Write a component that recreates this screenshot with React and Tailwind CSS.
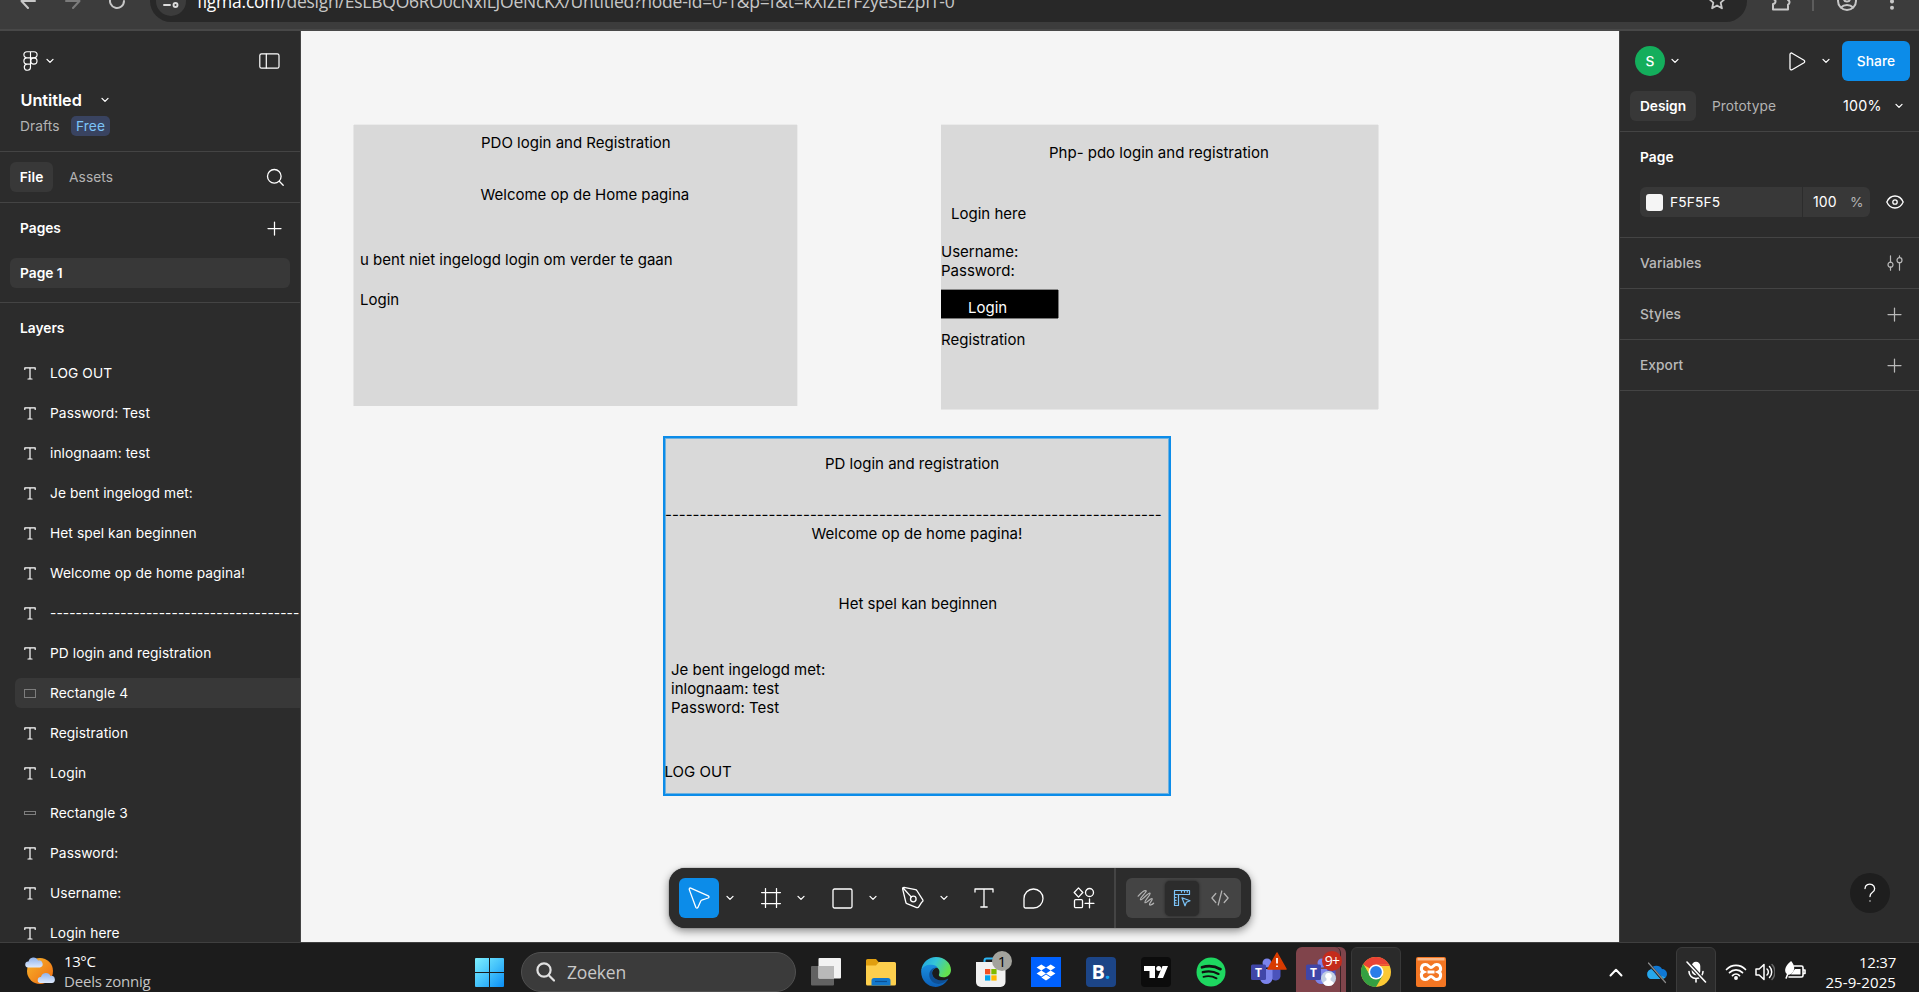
import React from "react";

const layers = [
  ["text", "LOG OUT"],
  ["text", "Password: Test"],
  ["text", "inlognaam: test"],
  ["text", "Je bent ingelogd met:"],
  ["text", "Het spel kan beginnen"],
  ["text", "Welcome op de home pagina!"],
  ["text", "---------------------------------------"],
  ["text", "PD login and registration"],
  ["rect", "Rectangle 4"],
  ["text", "Registration"],
  ["text", "Login"],
  ["bar", "Rectangle 3"],
  ["text", "Password:"],
  ["text", "Username:"],
  ["text", "Login here"],
];

function Svg({ w, h, vb, className = "", sw = 1.25, children }) {
  return (
    <svg
      width={w}
      height={h}
      viewBox={vb || `0 0 ${w} ${h}`}
      fill="none"
      stroke="currentColor"
      strokeWidth={sw}
      strokeLinecap="round"
      strokeLinejoin="round"
      className={`shrink-0 ${className}`}
    >
      {children}
    </svg>
  );
}

const Chevron = ({ className = "" }) => (
  <Svg w={8} h={6} sw={1.3} className={className}>
    <path d="M1 1.4l3 3 3-3" />
  </Svg>
);

const Plus = ({ className = "" }) => (
  <Svg w={15} h={15} className={className}>
    <path d="M7.500 1v13M1 7.500h13" />
  </Svg>
);

function BrowserBar() {
  return (
    <header className="flex h-[31px] shrink-0 items-end overflow-hidden border-b-2 border-[#484848] bg-[#3c3c3c] pb-[7px] font-['Open_Sans','Noto_Sans',sans-serif]">
      <div className="flex h-[42px] w-[150px] shrink-0 items-center pl-5">
        <Svg w={16} h={16} sw={2} className="text-[#c7c7c7]">
          <path d="M15 8H2M8 1L1.5 8 8 15" />
        </Svg>
        <Svg w={16} h={16} sw={2} className="ml-[29px] text-[#7b7b7b]">
          <path d="M1 8h13M8 1l6.5 7L8 15" />
        </Svg>
        <Svg w={16} h={16} sw={2} className="ml-[28px] text-[#c7c7c7]">
          <path d="M15 8A7 7 0 1 1 12.5 2.6" />
        </Svg>
      </div>
      <div className="flex h-[42px] w-[1597px] shrink-0 items-center rounded-full bg-[#282828] pl-1.5">
        <div className="flex size-[30px] items-center justify-center rounded-full bg-[#3c3c3c]">
          <Svg w={16} h={16} sw={1.9} className="text-[#dcdcdc]">
            <path d="M1 12h6M9 4h6" />
            <circle cx="12.5" cy="12" r="2" />
            <circle cx="3.5" cy="4" r="2" />
          </Svg>
        </div>
        <div className="ml-[11px] whitespace-nowrap text-[17.5px] leading-6 tracking-[-0.24px] text-[#c7c7c7]">
          <span className="text-white">figma.com</span>
          /design/EsLBQO6RO0cNxiLJOeNcKX/Untitled?node-id=0-1&amp;p=f&amp;t=kXIZErFzyeSEzpIT-0
        </div>
        <Svg w={18} h={18} sw={1.8} className="mr-[21px] ml-auto text-[#c7c7c7]">
          <path d="M9 1.2l2.3 5.2 5.6.5-4.2 3.8 1.2 5.6L9 13.4l-4.9 2.9 1.2-5.6L1.1 6.9l5.6-.5z" />
        </Svg>
      </div>
      <div className="flex h-[42px] grow items-center text-[#c7c7c7]">
        <Svg w={20} h={20} sw={2} className="ml-[24px]">
          <path d="M2 18.5V13a2.5 2.5 0 0 0 0-5V4h5a2.5 2.5 0 0 1 5 0h5v5a2.5 2.5 0 0 1 0 4.6v4.9z" />
        </Svg>
        <div className="ml-[21px] h-5 w-0.5 bg-[#5c5c5c]" />
        <Svg w={20} h={20} sw={2} className="ml-[23px]">
          <circle cx="10" cy="10" r="9" />
          <circle cx="10" cy="7.5" r="3" />
          <path d="M4 16.5c3-3.4 9-3.4 12 0" />
        </Svg>
        <Svg w={6} h={18} className="ml-[32px]">
          <g fill="currentColor" stroke="none">
            <circle cx="3" cy="3" r="2" />
            <circle cx="3" cy="9.4" r="2" />
            <circle cx="3" cy="15.8" r="2" />
          </g>
        </Svg>
      </div>
    </header>
  );
}

function LayerIcon({ kind }) {
  if (kind === "rect") return <span className="ml-px h-[9px] w-3 border border-[#7d7d7d]" />;
  if (kind === "bar") return <span className="ml-px h-[4px] w-3 border border-[#7d7d7d]" />;
  return (
    <Svg w={12} h={13} sw={1.2} className="ml-[0.5px] text-white">
      <path d="M.8 2.500V.8h10.400v1.700M6 .8v11.200M4 12h4" />
    </Svg>
  );
}

function LeftPanel() {
  return (
    <aside className="flex w-[301px] shrink-0 flex-col overflow-hidden border-r border-[#444] bg-[#2c2c2c] text-[13.75px] leading-5 tracking-[0.07px] text-white">
      <div className="h-[121px] shrink-0 border-b border-[#444] px-5 pt-5">
        <div className="flex h-5 items-center">
          <Svg w={15} h={20} sw={1.15} className="ml-[3px]">
            <path d="M7.500.7H4a3.100 3.100 0 0 0 0 6.200h3.500zM7.500.7H11a3.100 3.100 0 0 1 0 6.200H7.500zM7.500 6.900H4a3.100 3.100 0 0 0 0 6.200h3.500zM7.500 13.100H4a3.100 3.100 0 1 0 3.500 3.100z" />
            <circle cx="10.900" cy="10" r="3.100" />
          </Svg>
          <Chevron className="ml-2" />
          <Svg w={21} h={16} sw={1.2} className="ml-auto">
            <rect x=".8" y=".8" width="19.200" height="14.400" rx="1.800" />
            <path d="M7.300 1v14" />
          </Svg>
        </div>
        <div className="mt-[19px] flex h-5 items-center">
          <span className="w-[81px] pl-[0.5px] text-[16.25px] font-semibold tracking-[-0.05px]">Untitled</span>
          <Chevron />
        </div>
        <div className="mt-[6px] flex items-center text-[#b3b3b3]">
          <span className="w-[51px]">Drafts</span>
          <span className="rounded-[5px] bg-[#394360] px-[5px] text-[#7cc4f8]">Free</span>
        </div>
      </div>
      <div className="flex h-[51px] shrink-0 items-center border-b border-[#444] pr-4 pl-2.5">
        <span className="flex h-[30px] w-[43px] items-center justify-center rounded-md bg-[#383838] font-semibold">File</span>
        <span className="ml-4 text-[#b3b3b3]">Assets</span>
        <Svg w={18} h={18} sw={1.3} className="ml-auto">
          <circle cx="8.300" cy="8.300" r="6.800" />
          <path d="M13.300 13.300l3.900 3.900" />
        </Svg>
      </div>
      <div className="h-[100px] shrink-0 border-b border-[#444] font-semibold tracking-normal">
        <div className="flex h-[50px] items-center justify-between pr-[18px] pl-5">
          <span>Pages</span>
          <Plus />
        </div>
        <div className="mx-2.5 mt-[5px] flex h-[30px] items-center rounded-md bg-[#383838] pl-2.5">Page 1</div>
      </div>
      <div className="flex h-[50px] shrink-0 items-center pl-5 font-semibold tracking-normal">Layers</div>
      {layers.map(([kind, name], i) => (
        <div key={i} className="flex h-10 shrink-0 items-center pl-[15px]">
          <div className={`flex h-[30px] w-full items-center rounded-l-md pl-2 ${name === "Rectangle 4" ? "bg-[#383838]" : ""}`}>
            <div className="flex w-[27px] shrink-0 items-center">
              <LayerIcon kind={kind} />
            </div>
            <span className="whitespace-nowrap">{name}</span>
          </div>
        </div>
      ))}
    </aside>
  );
}

/* Canvas objects carry their own x/y, relative to the canvas origin. */
const canvasTexts = [
  [180, 102, "PDO login and Registration"],
  [179.5, 154, "Welcome op de Home pagina"],
  [59, 219, "u bent niet ingelogd login om verder te gaan"],
  [59, 259, "Login"],
  [748, 112, "Php- pdo login and registration"],
  [650, 173, "Login here"],
  [640, 211, "Username:"],
  [640, 230, "Password:"],
  [640, 299, "Registration"],
  [524, 423, "PD login and registration"],
  [510.5, 493, "Welcome op de home pagina!"],
  [537.5, 563, "Het spel kan beginnen"],
  [370, 629, "Je bent ingelogd met:"],
  [370, 648, "inlognaam: test"],
  [370, 667, "Password: Test"],
  [363.5, 731, "LOG OUT"],
];

function Toolbar() {
  return (
    <div className="absolute top-[837px] left-[368px] flex h-[60px] w-[582px] items-center rounded-2xl bg-[#2c2c2c] pl-2.5 text-white shadow-[0_3px_8px_rgba(0,0,0,0.45),0_0_1px_rgba(0,0,0,0.8)]">
      <div className="flex size-10 items-center justify-center rounded-md bg-[#0c8ce9]">
        <Svg w={24} h={24} sw={1.3}>
          <path d="M2.300 3.600c-.4-1 .4-1.900 1.400-1.500l17.600 7.700c1 .5.9 1.800-.1 2.200l-6.500 2.100c-.4.1-.7.4-.8.700l-3 6.600c-.5 1-1.700.9-2.100-.100z" />
        </Svg>
      </div>
      <Chevron className="ml-[7px]" />
      <Svg w={20} h={20} className="ml-[27px]" sw={1.25}>
        <path d="M4.500.6v18.800M15.500.6v18.800M.6 4.500h18.800M.6 15.500h18.800" />
      </Svg>
      <Chevron className="ml-4" />
      <Svg w={21} h={21} className="ml-[27px]" sw={1.3}>
        <rect x="1" y="1" width="19" height="19" rx="1.500" />
      </Svg>
      <Chevron className="ml-4" />
      <Svg w={24} h={24} className="ml-[24px]" sw={1.3}>
        <path d="M1.600 2.800C1.500 2 2.200 1.300 3 1.400l11.500 2.300c.5.1 1 .4 1.300.800l6 9.300c.4.700.2 1.500-.4 1.900l-.8.600-2.900 4.600c-.4.7-1.200.9-1.900.700l-9.900-3.900c-.5-.2-.9-.7-1-1.200zM1.900 1.700l8.500 9.400" />
        <circle cx="12.300" cy="13" r="2.800" />
      </Svg>
      <Chevron className="ml-[15px]" />
      <Svg w={20} h={20} className="ml-[26px]" sw={1.3}>
        <path d="M1 4V1h18v3M10 1v18M6.800 19h6.400" />
      </Svg>
      <Svg w={21} h={21} className="ml-[29px]" sw={1.3}>
        <path d="M1 10.500a9.500 9.500 0 1 1 9.500 9.500H2.500A1.500 1.500 0 0 1 1 18.500z" />
      </Svg>
      <Svg w={22} h={22} className="ml-[29px]" sw={1.3}>
        <path d="M5.500.9l4.300 4.600-4.300 4.600L1.200 5.500zM16.500 12v8.800M12.100 16.400h8.800" />
        <circle cx="16.500" cy="5.500" r="4" />
        <rect x="1.500" y="12.600" width="8" height="8" rx="1.200" />
      </Svg>
      <div className="ml-[19px] h-full w-0.5 bg-[#444]" />
      <div className="ml-[10px] flex h-10 w-[115px] items-center rounded-md bg-[#444] text-[#b3b3b3]">
        <Svg w={18} h={18} className="ml-[11px]" sw={1.25}>
          <path d="M1.200 7.200C3.500 4.500 7.500 1 9 1.700c1.500.9-6.800 7.600-5.500 9C4.800 12 11.500 3 13 4.200c1.300 1.100-6.300 8.200-4.900 9.500 1.200 1 5.700-4.900 7-3.900 1.100.9-3.400 4.800-2.500 6 .7.800 2.900-.6 4-1.600" />
        </Svg>
        <div className="ml-[10px] flex h-[35px] w-[34px] items-center justify-center rounded-[5px] bg-[#2c2c2c] text-[#7cc4f8] shadow-[0_0_3px_rgba(0,0,0,0.5)]">
          <Svg w={18} h={18} sw={1.2}>
            <path d="M5.500 16.500h-4V1.500h15v4h-11zM1.500 5.500h4M5.500 5.500v11M8.500 1.700v1.500M11.500 1.700v1.500M14.300 1.700v1.500M1.700 8.500h1.500M1.700 11.300h1.500M1.700 14h1.500M9 8.800l8 3-3.600 1.500-1.400 3.500z" />
          </Svg>
        </div>
        <Svg w={18} h={16} className="ml-3" sw={1.25}>
          <path d="M4.800 3.500L.9 8l3.900 4.500M13.200 3.500L17.100 8l-3.900 4.500M10.800 1L7.200 15" />
        </Svg>
      </div>
    </div>
  );
}

function Canvas() {
  return (
    <main className="relative w-[1318px] shrink-0 overflow-hidden bg-[#f5f5f5] text-[15px] leading-[19px] text-black">
      <div className="absolute top-[94px] left-[53px] h-[281px] w-[443px] bg-[#d9d9d9] shadow-[-1px_0_0_#e6e6e6,1px_0_0_#ebebeb,0_-1px_0_#ebebeb]" />
      <div className="absolute top-[94px] left-[640px] h-[284px] w-[437px] bg-[#d9d9d9] shadow-[1px_0_0_#e6e6e6,0_1px_0_#e6e6e6,0_-1px_0_#ebebeb]" />
      <div className="absolute top-[259px] left-[640px] h-[28px] w-[117px] bg-black shadow-[1px_0_0_#777,0_1px_0_#777,0_-1px_0_#888]" />
      <div className="absolute top-[405px] left-[362px] h-[360px] w-[508px] border-2 border-[#0c8ce9] bg-[#d9d9d9] shadow-[inset_0_0_0_1px_#6eb2e0]" />
      {canvasTexts.map(([x, y, text]) => (
        <span key={`${x}-${y}`} className="absolute whitespace-nowrap" style={{ left: x, top: y }}>
          {text}
        </span>
      ))}
      <span className="absolute top-[267px] left-[667px] text-white">Login</span>
      <span className="absolute top-[474px] left-[364px] whitespace-nowrap">{"-".repeat(72)}</span>
      <Toolbar />
    </main>
  );
}

function PanelRow({ label, children }) {
  return (
    <div className="flex h-[51px] shrink-0 items-center justify-between border-b border-[#444] pr-[17px] pl-5 font-medium text-[#b9b9b9]">
      <span>{label}</span>
      {children}
    </div>
  );
}

function RightPanel() {
  return (
    <aside className="flex w-[300px] shrink-0 flex-col border-l border-[#444] bg-[#2c2c2c] text-[13.75px] leading-5 tracking-[0.05px] text-white">
      <div className="h-[101px] shrink-0 border-b border-[#444]">
        <div className="flex h-[60px] items-center pr-[9px] pl-[15px]">
          <span className="flex size-[30px] items-center justify-center rounded-full bg-[#14ae5c] font-medium">S</span>
          <Chevron className="ml-1.5" />
          <Svg w={17} h={19} className="ml-[110px]" sw={1.3}>
            <path d="M1 2.400C1 1.300 2 .700 3 1.200l12 7c.9.600.9 1.900 0 2.500l-12 7c-1 .5-2-.100-2-1.200z" />
          </Svg>
          <Chevron className="ml-[16px]" />
          <span className="ml-auto flex h-10 w-[68px] items-center justify-center rounded-md bg-[#0c8ce9] font-medium">Share</span>
        </div>
        <div className="flex h-[30px] items-center pl-2.5">
          <span className="flex h-[30px] w-[66px] items-center justify-center rounded-md bg-[#383838] font-semibold tracking-normal">Design</span>
          <span className="ml-4 w-[130px] text-[#b3b3b3]">Prototype</span>
          <span className="w-[53px] pl-px text-[14.25px] tracking-[0.2px]">100%</span>
          <Chevron />
        </div>
      </div>
      <div className="h-[106px] shrink-0 border-b border-[#444] pl-5">
        <div className="flex h-[50px] items-center font-semibold">Page</div>
        <div className="mt-[5px] flex h-[30px] items-center">
          <div className="flex h-full w-[162px] items-center rounded-l-md bg-[#383838] pl-1.5">
            <span className="size-[17px] rounded-[3px] bg-[#f5f5f5]" />
            <span className="ml-[7px] tracking-[0.15px]">F5F5F5</span>
          </div>
          <div className="ml-px flex h-full w-[67px] items-center rounded-r-md bg-[#383838] pl-2.5">
            <span className="w-[37px] text-[14px]">100</span>
            <span className="text-[#b3b3b3]">%</span>
          </div>
          <Svg w={18} h={14} sw={1.3} className="ml-4">
            <path d="M.8 7C2.500 3.200 5.500 1 9 1s6.500 2.200 8.200 6c-1.700 3.800-4.700 6-8.200 6S2.500 10.800.8 7z" />
            <circle cx="9" cy="7" r="2.200" />
          </Svg>
        </div>
      </div>
      <PanelRow label="Variables">
        <Svg w={16} h={16} sw={1.2} className="-mr-px">
          <path d="M3.500.8v6.400M3.500 12v3.200M12.500.8v1.700M12.500 8v7.200" />
          <circle cx="3.500" cy="9.700" r="2.500" />
          <circle cx="12.500" cy="5.200" r="2.500" />
        </Svg>
      </PanelRow>
      <PanelRow label="Styles">
        <Plus />
      </PanelRow>
      <PanelRow label="Export">
        <Plus />
      </PanelRow>
      <div className="mt-auto mr-[29px] mb-[29px] flex size-10 items-center justify-center self-end rounded-full bg-[#1e1e1e]">
        <Svg w={12} h={20} sw={1.3}>
          <path d="M1 5.500a4.800 4.500 0 1 1 7.500 3.800C6.700 10.500 6 11.300 6 13.600M6 17.800v.300" />
        </Svg>
      </div>
    </aside>
  );
}

function TeamsLogo() {
  return (
    <svg width="30" height="28" viewBox="0 0 30 28">
      <circle cx="24" cy="7.500" r="3.400" fill="#5059c9" />
      <path d="M20 11h8.500a1 1 0 0 1 1 1v6.500a5 5 0 0 1-9.500 1z" fill="#4b53bc" />
      <circle cx="16" cy="5" r="4.500" fill="#7b83eb" />
      <path d="M9 11h12.500v9.500a6.300 6.300 0 0 1-12.500 0z" fill="#7b83eb" />
      <rect x="0" y="6.500" width="15" height="15.500" rx="1.500" fill="#4046a8" />
      <text x="7.500" y="18.500" textAnchor="middle" fontSize="12" fontWeight="700" fill="#fff" fontFamily="Open Sans, sans-serif">
        T
      </text>
    </svg>
  );
}

function Taskbar() {
  return (
    <footer className="flex h-[50px] shrink-0 overflow-hidden border-t border-[#3f3f3f] bg-[#1c1c1c] font-['Open_Sans','Noto_Sans',sans-serif] text-[15px] leading-5 text-white">
      <div className="flex w-[475px] shrink-0 pt-[8px] pl-[25px]">
        <svg width="30" height="32" viewBox="0 0 30 32" className="mt-[5px] shrink-0">
          <defs>
            <linearGradient id="sun" x1="0" y1="0" x2="1" y2="1">
              <stop offset="0" stopColor="#f6b62c" />
              <stop offset="1" stopColor="#f06a10" />
            </linearGradient>
            <linearGradient id="cloud" x1="0" y1="0" x2="0" y2="1">
              <stop offset="0" stopColor="#8fb2ec" />
              <stop offset="1" stopColor="#dfeafc" />
            </linearGradient>
          </defs>
          <circle cx="15" cy="15" r="13" fill="url(#sun)" />
          <path d="M3 11.500a3 3 0 0 1 .5-6A5 5 0 0 1 13 4.500a3.500 3.500 0 0 1 2 7z" fill="url(#cloud)" />
          <path d="M15.500 27a3 3 0 0 1 .5-6 5 5 0 0 1 9.500-1 3.500 3.500 0 0 1 1.500 7z" fill="url(#cloud)" />
        </svg>
        <div className="ml-[9px] flex flex-col">
          <span className="tracking-[-0.4px]">13°C</span>
          <span className="tracking-[-0.2px] text-[#c4c4c4]">Deels zonnig</span>
        </div>
      </div>

      <svg width="29" height="29" viewBox="0 0 29 29" className="mt-[15px] shrink-0">
        <defs>
          <linearGradient id="win" gradientUnits="userSpaceOnUse" x1="0" y1="0" x2="29" y2="29">
            <stop offset="0" stopColor="#7df0ff" />
            <stop offset=".5" stopColor="#45c3fb" />
            <stop offset="1" stopColor="#0a8df5" />
          </linearGradient>
        </defs>
        <path d="M0 1a1 1 0 0 1 1-1h13v14H0zM15 0h13a1 1 0 0 1 1 1v13H15zM0 15h14v14H1a1 1 0 0 1-1-1zM15 15h14v13a1 1 0 0 1-1 1H15z" fill="url(#win)" />
      </svg>

      <div className="mt-[9px] ml-[17px] flex h-10 w-[275px] shrink-0 items-center rounded-full border border-[#505050] bg-[#3b3b3b] pl-3.5 text-[17.5px] tracking-[-0.2px] text-[#c8c8c8]">
        <Svg w={19} h={20} sw={2.2} className="mr-3 text-[#e0e0e0]">
          <circle cx="8" cy="8" r="6.600" />
          <path d="M13 13.500l5 5" />
        </Svg>
        Zoeken
      </div>

      <svg width="30" height="28" viewBox="0 0 30 28" className="mt-[15px] ml-[15px] shrink-0">
        <rect x="0" y="8" width="23" height="19.500" rx="1" fill="#626262" />
        <rect x="7.500" y="0" width="22.500" height="20.500" rx="1" fill="#f2f2f2" />
        <rect x="7.500" y="8" width="15.500" height="12.500" fill="#b9b9b9" />
      </svg>

      <svg width="30" height="28" viewBox="0 0 30 28" className="mt-[16px] ml-[25px] shrink-0">
        <path d="M0 1.500A1.500 1.500 0 0 1 1.500 0h8.500l3 3.500V9H0z" fill="#e09f10" />
        <path d="M0 6.500h10l3-3.500h15.500A1.500 1.500 0 0 1 30 4.500V25a1.500 1.500 0 0 1-1.500 1.500h-27A1.500 1.500 0 0 1 0 25z" fill="#fdcf4d" />
        <path d="M5.500 26.500V21.500a2.500 2.500 0 0 1 2.500-2.500h14a2.500 2.500 0 0 1 2.500 2.500v5z" fill="#1378cc" />
        <path d="M9 22.500h12" stroke="#0b4f93" strokeWidth="1.200" />
      </svg>

      <svg width="30" height="30" viewBox="0 0 30 30" className="mt-[14px] ml-[25px] shrink-0">
        <defs>
          <linearGradient id="edgeTop" x1="0" y1="0" x2="1" y2=".4">
            <stop offset="0" stopColor="#1d9fe0" />
            <stop offset=".5" stopColor="#35c5d8" />
            <stop offset="1" stopColor="#63e04f" />
          </linearGradient>
          <linearGradient id="edgeLow" x1="0" y1="0" x2="0" y2="1">
            <stop offset="0" stopColor="#1a8fe0" />
            <stop offset="1" stopColor="#0b5fb8" />
          </linearGradient>
        </defs>
        <path d="M.3 13.500C1 5.500 7.500 0 15 0c8.500 0 15 6 15 13 0 4.500-3.500 7.300-7.500 7.300-3.500 0-5-1.400-4.600-2.500 1.400-3.300.6-8-5.900-8.300-5-.2-9.500 1.500-11.700 4z" fill="url(#edgeTop)" />
        <path d="M.2 13.500C1.500 9.500 6 7.500 10.500 7.800c3 .2 5 1.200 6.300 2.700-4.500.4-6.300 4-5.500 7.500 1.200 5.300 8.700 8.300 15.700 4.300C24.500 26.500 20 30 14.500 30 6 30-.5 22.500.2 13.500z" fill="url(#edgeLow)" />
        <path d="M16.800 10.500c-7.300-.5-10.300 6-7.500 11.500 3.300 6.300 11.700 6.500 17.500.800.500-.8.600-1.300 0-1-7 3.500-14.300.5-15.500-4.300-.9-3.500 1-6.600 5.500-7z" fill="#0f4f94" />
      </svg>

      <div className="relative mt-[14px] ml-[25px] h-[30px] w-[30px] shrink-0">
        <svg width="30" height="30" viewBox="0 0 30 30">
          <path d="M8.500 5.500V3.500a2 2 0 0 1 2-2h9a2 2 0 0 1 2 2v2" fill="none" stroke="#2cb5f5" strokeWidth="2" />
          <path d="M0 5h29.500v20a5 5 0 0 1-5 5H5a5 5 0 0 1-5-5z" fill="#f1f1f1" />
          <path fill="#f25022" d="M9 12h5.300v5.300H9z" />
          <path fill="#7fba00" d="M15.300 12h5.300v5.300h-5.300z" />
          <path fill="#00a4ef" d="M9 18.300h5.300v5.300H9z" />
          <path fill="#ffb900" d="M15.300 18.300h5.300v5.300h-5.300z" />
        </svg>
        <span className="absolute -top-[6px] left-[16px] flex size-5 items-center justify-center rounded-full bg-[#a3a39d] text-[15px] leading-none text-black">1</span>
      </div>

      <svg width="30" height="30" viewBox="0 0 30 30" className="mt-[14px] ml-[25px] shrink-0">
        <path fill="#0061fe" d="M0 0h30v30H0z" />
        <path fill="#fff" d="M10.300 7.500l4.700 3-4.700 3-4.700-3zM19.700 7.500l4.700 3-4.700 3-4.700-3zM10.300 13.500l4.700 3-4.700 3-4.700-3zM19.700 13.500l4.700 3-4.700 3-4.700-3zM15 17.600l4.600 2.900-4.600 2.900-4.600-2.900z" />
      </svg>

      <div className="mt-[14px] ml-[25px] flex size-[30px] shrink-0 items-center justify-center rounded-[4px] bg-[#1c4587] text-[20px] leading-none font-bold">
        <span>B</span>
        <span className="text-[#12a5f4]">.</span>
      </div>

      <svg width="30" height="30" viewBox="0 0 30 30" className="mt-[14px] ml-[25px] shrink-0">
        <rect width="30" height="30" rx="4" fill="#0c0c0c" />
        <path fill="#fff" d="M3 9h11v12H8.500v-7H3zM21.500 9H27l-5 12h-5.500z" />
        <circle cx="17.700" cy="11.600" r="2.500" fill="#fff" />
      </svg>

      <svg width="30" height="30" viewBox="0 0 30 30" className="mt-[14px] ml-[25px] shrink-0">
        <circle cx="15" cy="15" r="14.500" fill="#1ed760" />
        <g fill="none" stroke="#111" strokeLinecap="round">
          <path d="M6 10.300c6-1.800 13-1.200 18.500 1.900" strokeWidth="2.700" />
          <path d="M6.800 15.200c5.300-1.500 11-.9 15.700 1.700" strokeWidth="2.300" />
          <path d="M7.500 19.800c4.500-1.200 9-.7 13 1.500" strokeWidth="1.900" />
        </g>
      </svg>

      <div className="relative mt-[15px] ml-[25px] h-[30px] w-[30px] shrink-0">
        <TeamsLogo />
        <svg width="20" height="18" viewBox="0 0 20 18" className="absolute -top-[6px] left-[16px]">
          <path d="M10 1l9 16H1z" fill="#d83b01" stroke="#d83b01" strokeWidth="1.500" strokeLinejoin="round" />
          <path d="M10 6v5.500M10 13.500v1.500" stroke="#fff" strokeWidth="1.800" />
        </svg>
      </div>

      <div className="mt-1 ml-[15px] flex h-[50px] w-[50px] shrink-0 rounded-t-md bg-[#80444b]">
        <div className="relative h-full w-[45px] rounded-tr-md border-r border-[#3a2326] pt-[11px] pl-[10px]">
          <TeamsLogo />
          <span className="absolute top-[24px] left-[25px] size-[15px] overflow-hidden rounded-full bg-[#c3d0e3]">
            <svg width="15" height="15" viewBox="0 0 15 15">
              <path d="M7.500 2a3 3 0 0 1 2 5.500v1.800l3 2V15h-10v-3.700l3-2V7.500a3 3 0 0 1 2-5.500z" fill="#fff" />
            </svg>
          </span>
          <span className="absolute top-[4px] left-[26px] flex size-[20px] items-center justify-center rounded-full bg-[#c42b1c] text-[14px] leading-none tracking-[-0.8px]">9+</span>
        </div>
      </div>

      <div className="mt-1 ml-[5px] flex h-[50px] w-[50px] shrink-0 rounded-t-md border border-[#383838] bg-[#2a2a2a] pt-[9px] pl-[9px]">
        <svg width="30" height="30" viewBox="0 0 30 30">
          <circle cx="15" cy="15" r="15" fill="#fcc934" />
          <path d="M15 15L2 7.500A15 15 0 0 1 28 7.500H15z" fill="#ea4335" />
          <path d="M15 8.200h13.400" stroke="#ea4335" strokeWidth="1.400" />
          <path d="M2 7.500A15 15 0 0 0 15 30l6.500-11.200L15 15l-6.500 3.800z" fill="#34a042" />
          <path d="M8.600 18.500L2 7.500" stroke="#34a042" />
          <circle cx="15" cy="15" r="7.500" fill="#fff" />
          <circle cx="15" cy="15" r="5.900" fill="#2b7de9" />
        </svg>
      </div>

      <svg width="30" height="30" viewBox="0 0 30 30" className="mt-[14px] ml-[15px] shrink-0">
        <rect width="30" height="30" rx="2" fill="#f37623" />
        <path d="M1.500 1h27v2.500h-27z" fill="#f9b98a" />
        <path d="M9.500 7.500c3 0 3.500 3 5.500 3s2.500-3 5.500-3c4.500 0 5.500 6 2 7.500 3.500 1.500 2.500 7.500-2 7.500-3 0-3.500-3-5.500-3s-2.500 3-5.500 3c-4.500 0-5.500-6-2-7.500-3.500-1.500-2.500-7.500 2-7.500z" fill="none" stroke="#fff" strokeWidth="3" />
        <path d="M11.500 15h7" stroke="#fff" strokeWidth="3" />
      </svg>

      <div className="ml-auto flex shrink-0 pr-[23px]">
        <Svg w={14} h={9} sw={2} className="mt-[25px]">
          <path d="M1.500 7.500L7 1.800l5.500 5.700" />
        </Svg>
        <Svg w={21} h={22} className="mt-[19px] ml-[23px]" sw={0}>
          <path d="M5 17a5 5 0 0 1-.5-9.500A6.500 6.500 0 0 1 16 7a5 5 0 0 1 0 10z" fill="#0f78d4" />
          <path d="M5 17a5 5 0 0 1-.5-9.500c3-.5 5 1 7 3.500s5 3 8 4.500a5 5 0 0 1-3.500 1.500z" fill="#28a8ea" />
          <path d="M2 1l17 19.500" stroke="#1c1c1c" strokeWidth="2.400" />
          <path d="M2.500 1l17 19.500" stroke="#8b8b8b" strokeWidth="1.200" />
        </Svg>
        <div className="mt-1 ml-[9px] flex h-[50px] w-10 justify-center rounded-t-md border border-[#3c3c3c] bg-[#2a2a2a] pt-[13px]">
          <Svg w={22} h={22} sw={1.6}>
            <rect x="7.500" y="1.500" width="7" height="12" rx="3.500" fill="currentColor" />
            <path d="M4 10.500a7 7 0 0 0 14 0M11 17.500V21" />
            <path d="M2 1l18.500 20" stroke="#2a2a2a" strokeWidth="4" />
            <path d="M2 1l18.500 20" />
          </Svg>
        </div>
        <Svg w={22} h={17} sw={1.7} className="mt-[20px] ml-[9px]">
          <path d="M1.500 6.500a13 13 0 0 1 19 0M4.500 9.700a9 9 0 0 1 13 0M7.500 12.600a5 5 0 0 1 7 0" />
          <circle cx="11" cy="15" r="1.100" fill="currentColor" />
        </Svg>
        <Svg w={20} h={18} sw={1.5} className="mt-[20px] ml-[8px]">
          <path d="M1 6v6h3.200L9 16.500v-15L4.200 6zM12 6a4 4 0 0 1 0 6M14.500 3.500a8 8 0 0 1 0 11" />
          <path d="M17 1.500a11 11 0 0 1 0 15" stroke="#666" />
        </Svg>
        <Svg w={21} h={20} sw={1.6} className="mt-[18px] ml-[10px]">
          <path d="M9 5h7.500A1.500 1.500 0 0 1 18 6.500v8a1.500 1.500 0 0 1-1.500 1.500H4M18.500 9h1.500v3.500h-1.500" />
          <path d="M10 8h5.500v5.500H6z" fill="currentColor" stroke="none" />
          <path d="M6 1c3 4 3.500 8.500 0 11-1.500 1-3.500.8-4.500-.5C0 8.500 2 4.500 6 1zM1.200 17c1-3 2-5 3.500-7" fill="#fff" />
        </Svg>
        <div className="ml-[20px] flex w-[70px] flex-col items-end pt-[9px] whitespace-nowrap">
          <span className="tracking-[-0.25px]">12:37</span>
          <span className="tracking-[0.1px]">25-9-2025</span>
        </div>
      </div>
    </footer>
  );
}

export default function App() {
  return (
    <div className="flex h-[992px] w-[1919px] flex-col overflow-hidden bg-[#2c2c2c] font-['Inter',sans-serif]">
      <BrowserBar />
      <div className="flex h-[911px] shrink-0 overflow-hidden">
        <LeftPanel />
        <Canvas />
        <RightPanel />
      </div>
      <Taskbar />
    </div>
  );
}
